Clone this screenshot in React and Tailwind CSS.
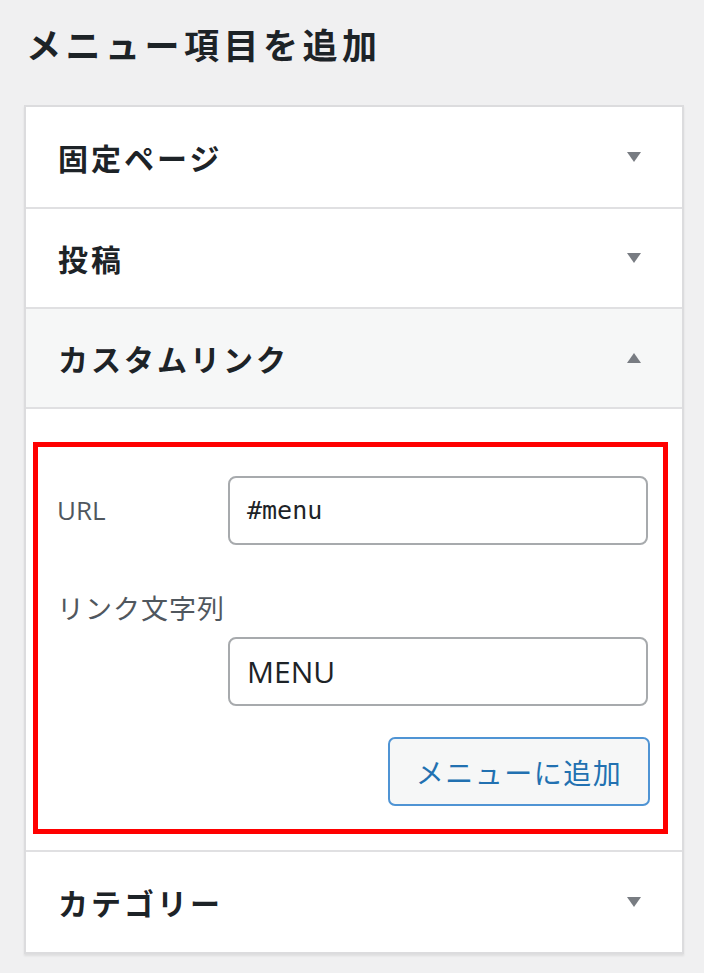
const jp = { fontFamily: '"Noto Sans CJK JP", "Noto Sans", sans-serif' };
const ui = { fontFamily: '"Open Sans", "Noto Sans CJK JP", sans-serif' };
const mono = { fontFamily: '"DejaVu Sans Mono", "Liberation Mono", monospace' };

const Caret = ({ up }) => (
  <svg width="16" height="12" viewBox="0 0 16 12" className="mr-[40px]">
    {up ? <polygon points="8,1 15,11 1,11" fill="#787c82" /> : <polygon points="1,1 15,1 8,11" fill="#787c82" />}
  </svg>
);

const Row = ({ title, open, first }) => (
  <div
    className={`h-[100px] flex items-center justify-between pl-[32px] ${first ? "" : "border-t-2 border-[#e0e0e2]"} ${open ? "bg-[#f6f7f7]" : "bg-white"}`}
  >
    <span className="text-[30px] font-bold text-[#1d2327] tracking-[3px] leading-none" style={jp}>
      {title}
    </span>
    <Caret up={open} />
  </div>
);

export default function App() {
  return (
    <div className="min-h-screen bg-[#f0f0f1] pt-[26px] pl-[24px]">
      <h2 className="text-[35px] font-bold text-[#1d2327] leading-none tracking-[4.5px] pl-[2px]" style={jp}>
        メニュー項目を追加
      </h2>

      <div className="mt-[44px] w-[660px] border-2 border-[#dcdcde] bg-white shadow-[0_2px_2px_rgba(0,0,0,0.08)]">
        <Row title="固定ページ" first />
        <Row title="投稿" />
        <Row title="カスタムリンク" open />

        <div className="border-t-2 border-[#e0e0e2] pt-[33px] pb-[16px] pl-[7px] pr-[14px]">
          <div className="border-[5px] border-[#ff0000] pt-[29px] pb-[23px] pl-[19px] pr-[15px] flex flex-col">
            <div className="flex items-center justify-between">
              <span className="text-[26px] text-[#50575e]" style={ui}>URL</span>
              <div className="w-[420px] h-[69px] rounded-[8px] border-2 border-[#a7aaad] flex items-center px-[17px]">
                <span className="text-[25px] text-[#1d2327]" style={mono}>#menu</span>
              </div>
            </div>

            <div className="mt-[49px] text-[27px] text-[#50575e] leading-none tracking-[1px]" style={jp}>
              リンク文字列
            </div>

            <div className="mt-[16px] flex justify-end">
              <div className="w-[420px] h-[69px] rounded-[8px] border-2 border-[#a7aaad] flex items-center px-[17px]">
                <span className="text-[30px] text-[#1d2327]" style={ui}>MENU</span>
              </div>
            </div>

            <div className="mt-[31px] flex justify-end -mr-[2px]">
              <button
                className="w-[262px] h-[69px] rounded-[7px] border-2 border-[#4f94d4] bg-[#f6f7f7] text-[#2271b1] text-[28px] tracking-[1.5px] flex items-center justify-center"
                style={jp}
              >
                メニューに追加
              </button>
            </div>
          </div>
        </div>

        <div className="border-t-2 border-[#e0e0e2]">
          <Row title="カテゴリー" first />
        </div>
      </div>
    </div>
  );
}
